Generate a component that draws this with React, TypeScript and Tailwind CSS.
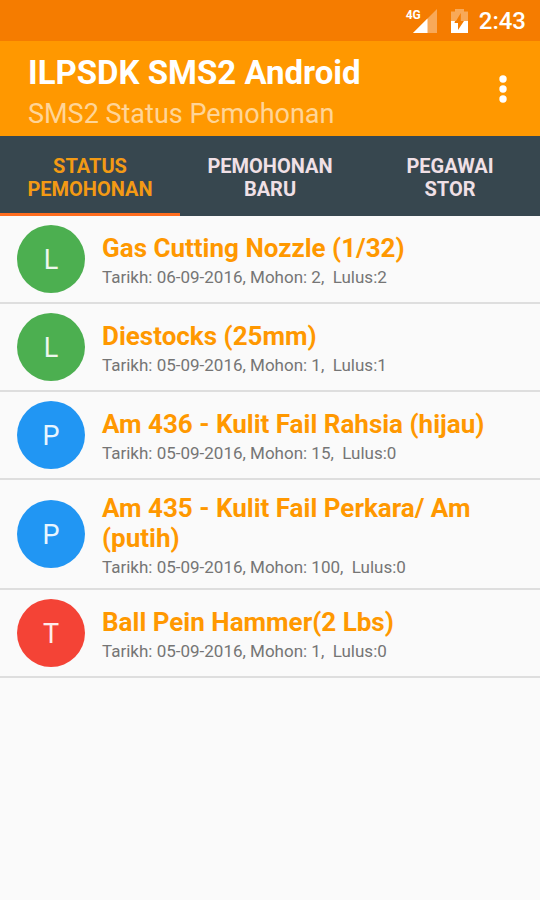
import { useState } from 'react';

interface Request {
  id: number;
  initial: string;
  color: string;
  title: string;
  date: string;
  requested: number;
  approved: number;
}

const requests: Request[] = [
  { id: 1, initial: 'L', color: 'bg-[#4caf50]', title: 'Gas Cutting Nozzle (1/32)', date: '06-09-2016', requested: 2, approved: 2 },
  { id: 2, initial: 'L', color: 'bg-[#4caf50]', title: 'Diestocks (25mm)', date: '05-09-2016', requested: 1, approved: 1 },
  { id: 3, initial: 'P', color: 'bg-[#2196f3]', title: 'Am 436 - Kulit Fail Rahsia (hijau)', date: '05-09-2016', requested: 15, approved: 0 },
  { id: 4, initial: 'P', color: 'bg-[#2196f3]', title: 'Am 435 - Kulit Fail Perkara/ Am (putih)', date: '05-09-2016', requested: 100, approved: 0 },
  { id: 5, initial: 'T', color: 'bg-[#f44336]', title: 'Ball Pein Hammer(2 Lbs)', date: '05-09-2016', requested: 1, approved: 0 },
];

const tabs = ['STATUS PEMOHONAN', 'PEMOHONAN BARU', 'PEGAWAI STOR'];

function StatusBar() {
  return (
    <div className="flex h-[41px] items-center justify-end bg-[#f57c00] pr-3.5 text-white">
      <div className="flex items-start">
        <span className="text-xs leading-3 font-bold">4G</span>
        <svg width="24" height="24" viewBox="0 0 24 24" className="-ml-2" aria-hidden="true">
          <path d="M24 0V24H0Z" fill="#fff" fillOpacity="0.35" />
          <path d="M14.5 9.5V24H0Z" fill="#fff" />
        </svg>
      </div>
      <svg width="18" height="24" viewBox="0 0 18 24" className="ml-3.5" aria-hidden="true">
        <path d="M4 0H13V2.5H17V12H9.8V4L5 12H0V2.5H4Z" fill="#fff" fillOpacity="0.35" />
        <path d="M0 12H4L3.5 14H7V21L13 12H17V24H0Z" fill="#fff" />
      </svg>
      <span className="ml-2.5 text-2xl font-medium">2:43</span>
    </div>
  );
}

function RequestRow({ request }: { request: Request }) {
  return (
    <li className="flex items-center gap-[17px] border-b-2 border-[#dedede] py-[9px] pr-9 pl-[17px]">
      <div className={`flex size-[68px] shrink-0 items-center justify-center rounded-full pt-0.5 text-[27px] text-white/90 ${request.color}`}>
        {request.initial}
      </div>
      <div className="py-1">
        <h2 className="text-[26px] leading-[30px] font-bold text-[#ff9800]">{request.title}</h2>
        <p className="mt-1.5 text-[17px] leading-4 whitespace-pre text-[#757575]">
          {`Tarikh: ${request.date}, Mohon: ${request.requested},  Lulus:${request.approved}`}
        </p>
      </div>
    </li>
  );
}

export default function App() {
  const [activeTab, setActiveTab] = useState(0);

  return (
    <div className="min-h-screen bg-[#fafafa] font-[Roboto,sans-serif]">
      <StatusBar />

      <header className="flex items-center justify-between bg-[#ff9800] py-3 pr-6 pl-7">
        <div>
          <h1 className="text-[33px] leading-10 font-bold text-white">ILPSDK SMS2 Android</h1>
          <p className="h-[31px] text-[27px] leading-[42px] text-white/60">SMS2 Status Pemohonan</p>
        </div>
        <button type="button" aria-label="More options" className="px-2 py-2">
          <svg width="10" height="30" viewBox="0 0 10 30" fill="#fff" aria-hidden="true">
            <circle cx="5" cy="5" r="3.7" />
            <circle cx="5" cy="15" r="3.7" />
            <circle cx="5" cy="25" r="3.7" />
          </svg>
        </button>
      </header>

      <nav className="grid grid-cols-3 bg-[#37474f]">
        {tabs.map((tab, idx) => (
          <button
            key={tab}
            type="button"
            onClick={() => setActiveTab(idx)}
            className={`flex h-20 items-center justify-center border-b-3 px-6 pt-1.5 text-xl leading-[23px] font-bold ${
              idx === activeTab ? 'border-[#ff6d1f] text-[#f39a14]' : 'border-transparent text-[#f0e0e6]'
            }`}
          >
            {tab}
          </button>
        ))}
      </nav>

      <ul>
        {requests.map(request => (
          <RequestRow key={request.id} request={request} />
        ))}
      </ul>
    </div>
  );
}
